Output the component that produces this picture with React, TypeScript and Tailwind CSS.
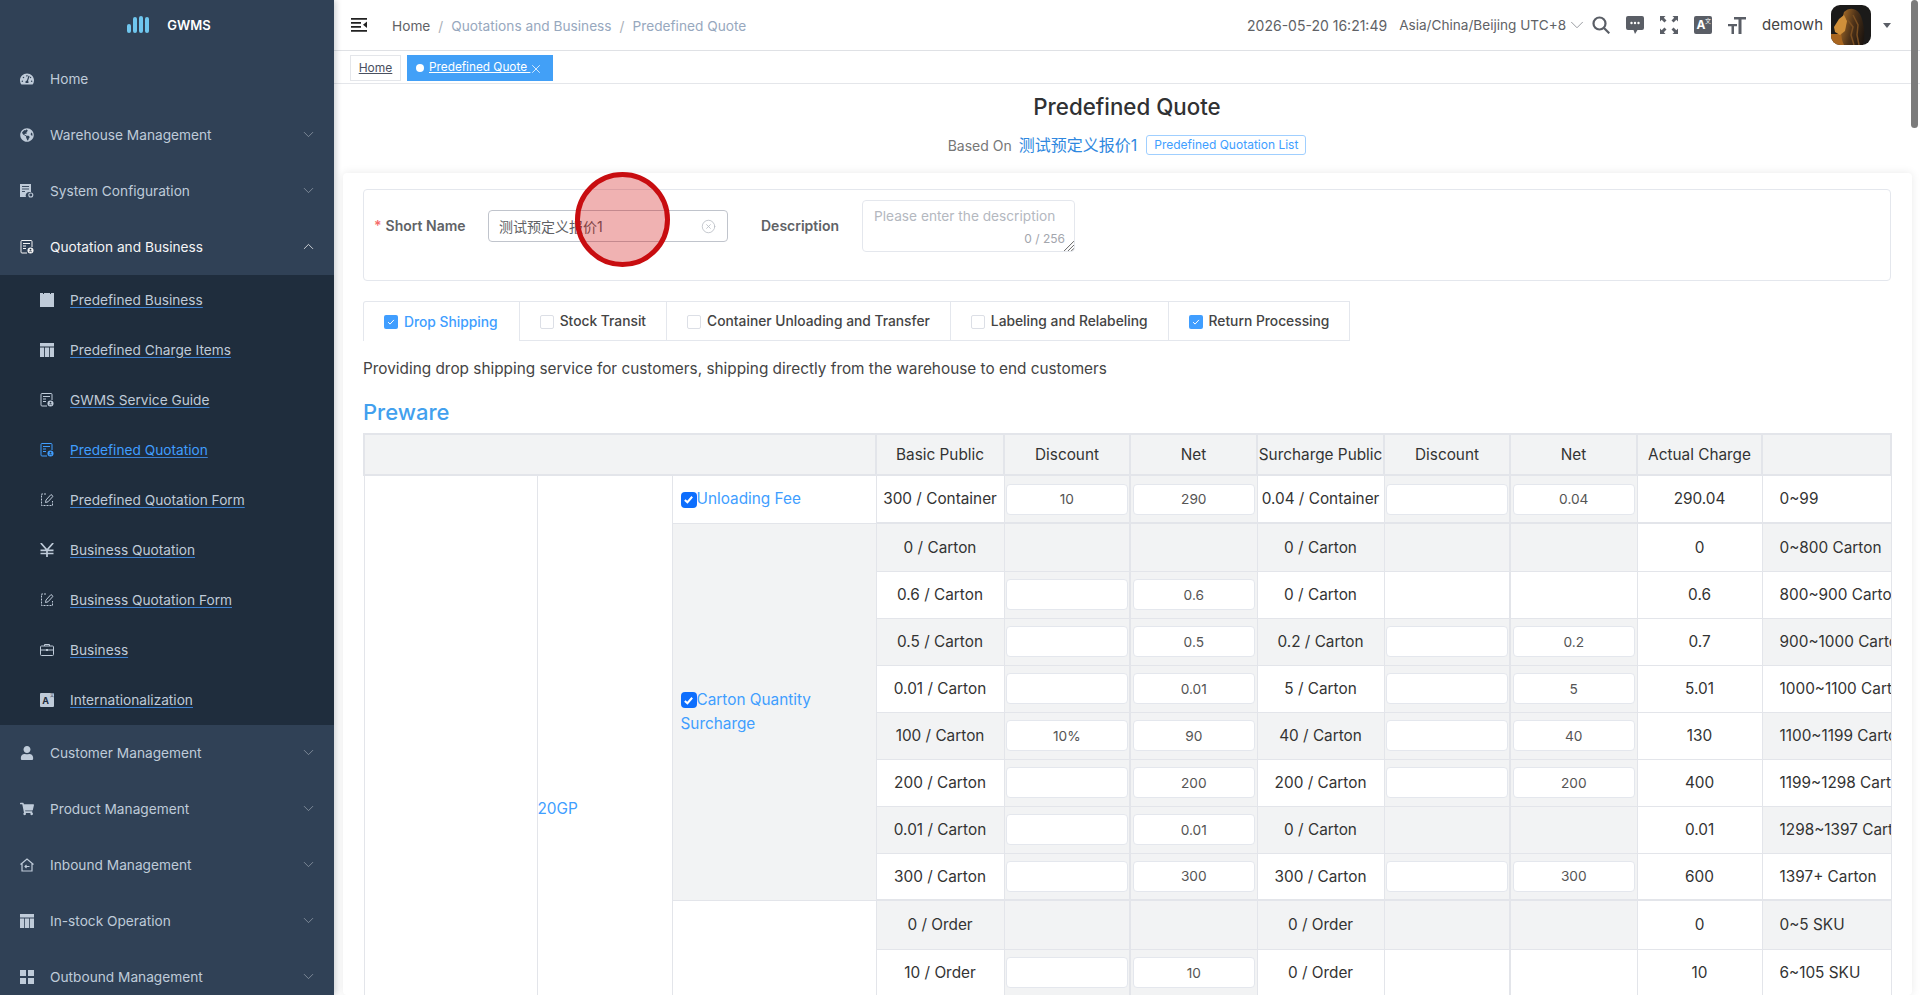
import React from "react";
import { ChevronDown, ChevronUp, X, CircleX } from "lucide-react";
import { FaTachometerAlt, FaGlobeAmericas, FaUser, FaShoppingCart } from "react-icons/fa";

const C = "w-[14px] h-[14px] shrink-0";

const DocIcon = () => (
  <svg viewBox="0 0 14 14" className={C} fill="none" stroke="currentColor" strokeWidth="1">
    <path d="M7 13H2a1 1 0 0 1-1-1V1.5a1 1 0 0 1 1-1h9a1 1 0 0 1 1 1V7" />
    <path d="M3 3.5h7M3 6h3M3 8.5h3" />
    <circle cx="10.5" cy="10.5" r="3" fill="currentColor" stroke="none" />
    <circle cx="10.5" cy="9.7" r="0.9" fill="#1f2d3d" stroke="none" />
    <path d="M9 12.2c.4-1 2.600-1 3 0" stroke="#1f2d3d" strokeWidth="0.7" />
  </svg>
);
const EditIcon = () => (
  <svg viewBox="0 0 14 14" className={C} fill="none" stroke="currentColor" strokeWidth="1">
    <path d="M6 1H1.500v11.500H12.500V8" strokeDasharray="2 1" />
    <path d="M5.500 9.500l.5-2.500 5-5.500 2 1.800-5 5.500z" />
  </svg>
);
const CalIcon = () => (
  <svg viewBox="0 0 14 14" className={C} fill="currentColor">
    <path d="M0 0h3v1h1V0h6v1h1V0h3v14H0z" />
  </svg>
);
const TableIcon = () => (
  <svg viewBox="0 0 14 14" className={C} fill="currentColor">
    <path d="M0 0h14v3.500H0zM0 4.500h4.200V14H0zM5 4.500h4V14H5zM9.800 4.500H14V14H9.800z" />
  </svg>
);
const YenIcon = () => (
  <svg viewBox="0 0 14 14" className={C} fill="none" stroke="currentColor" strokeWidth="1.700">
    <path d="M.8 0L7 7l6.200-7M7 7v7M.5 7.300h13M.5 10.500h13" />
  </svg>
);
const GridIcon = () => (
  <svg viewBox="0 0 14 14" className={C} fill="currentColor">
    <path d="M0 0h6v6H0zM8 0h6v6H8zM0 8h6v6H0zM8 8h6v6H8z" />
  </svg>
);
const CaseIcon = () => (
  <svg viewBox="0 0 14 14" className={C} fill="none" stroke="currentColor" strokeWidth="1">
    <rect x="0.500" y="3" width="13" height="9.500" rx="1" />
    <path d="M4.500 3V1.500h5V3M0.500 7h13" />
    <rect x="6" y="6" width="2" height="2" fill="currentColor" stroke="none" />
  </svg>
);
const SysIcon = () => (
  <svg viewBox="0 0 14 14" className={C} fill="currentColor">
    <path d="M0 0h11v8H9a3.500 3.500 0 0 0-3 5H0z" />
    <path d="M2 2.500h7M2 5h7M2 7.500h3" stroke="#304156" strokeWidth="0.900" />
    <circle cx="10.800" cy="11" r="2" fill="none" stroke="currentColor" strokeWidth="1.100" />
  </svg>
);
const InboundIcon = () => (
  <svg viewBox="0 0 14 14" className={C} fill="none" stroke="currentColor" strokeWidth="1.200">
    <path d="M.5 6.500L7 1l6.500 5.500M2 5.500V13h10V5.500" />
    <path d="M9.500 8.500H5M6.500 7L5 8.500 6.500 10" strokeWidth="1.100" />
  </svg>
);
const TransBadge = ({ dark }: { dark?: boolean }) => (
  <span
    className={
      dark
        ? "w-[18px] h-[18px] shrink-0 rounded-[2px] bg-[#5a5e66] text-white flex items-center justify-center text-[12px] font-bold leading-none relative pr-[4px]"
        : "w-[14px] h-[14px] shrink-0 rounded-[1px] bg-[#bfcbd9] text-[#1f2d3d] flex items-center justify-center text-[9px] font-bold leading-none relative pr-[3px]"
    }
  >
    A
    <span className={dark ? "absolute right-[1px] top-[2px] text-[6px] font-normal" : "absolute right-0 top-[1px] text-[4px] font-normal"}>文</span>
  </span>
);

const menu1 = [
  { t: "Home", i: <FaTachometerAlt className={C} /> },
  { t: "Warehouse Management", i: <FaGlobeAmericas className={C} />, c: 1 },
  { t: "System Configuration", i: <SysIcon />, c: 1 },
];
const subs = [
  { t: "Predefined Business", i: <CalIcon /> },
  { t: "Predefined Charge Items", i: <TableIcon /> },
  { t: "GWMS Service Guide", i: <DocIcon /> },
  { t: "Predefined Quotation", i: <DocIcon />, a: 1 },
  { t: "Predefined Quotation Form", i: <EditIcon /> },
  { t: "Business Quotation", i: <YenIcon /> },
  { t: "Business Quotation Form", i: <EditIcon /> },
  { t: "Business", i: <CaseIcon /> },
  { t: "Internationalization", i: <TransBadge /> },
];
const menu2 = [
  { t: "Customer Management", i: <FaUser className={C} /> },
  { t: "Product Management", i: <FaShoppingCart className={C} /> },
  { t: "Inbound Management", i: <InboundIcon /> },
  { t: "In-stock Operation", i: <TableIcon /> },
  { t: "Outbound Management", i: <GridIcon /> },
];

function MenuRow({ t, i, c }: { t: string; i: React.ReactNode; c?: boolean | number }) {
  return (
    <div className="h-[56px] flex items-center pl-[20px] pr-[17px] text-[#bfcbd9] text-[13.7px]">
      {i}
      <span className="ml-[16px] flex-1">{t}</span>
      {c ? <ChevronDown className="w-[17px] h-[17px] text-[#909ba8] mb-[2px]" strokeWidth={1.1} /> : null}
    </div>
  );
}

type R = [string, string | null, string | null, string, string | null, string | null, string, string];
const carton: R[] = [
  ["0 / Carton", null, null, "0 / Carton", null, null, "0", "0~800 Carton"],
  ["0.6 / Carton", "", "0.6", "0 / Carton", null, null, "0.6", "800~900 Carton"],
  ["0.5 / Carton", "", "0.5", "0.2 / Carton", "", "0.2", "0.7", "900~1000 Carton"],
  ["0.01 / Carton", "", "0.01", "5 / Carton", "", "5", "5.01", "1000~1100 Carton"],
  ["100 / Carton", "10%", "90", "40 / Carton", "", "40", "130", "1100~1199 Carton"],
  ["200 / Carton", "", "200", "200 / Carton", "", "200", "400", "1199~1298 Carton"],
  ["0.01 / Carton", "", "0.01", "0 / Carton", null, null, "0.01", "1298~1397 Carton"],
  ["300 / Carton", "", "300", "300 / Carton", "", "300", "600", "1397+ Carton"],
];
const sku: R[] = [
  ["0 / Order", null, null, "0 / Order", null, null, "0", "0~5 SKU"],
  ["10 / Order", "", "10", "0 / Order", null, null, "10", "6~105 SKU"],
];

const bd = "border border-[#e3e5ea]";

function InputCell({ v, rowBg, thick, top }: { v: string | null; rowBg: boolean; thick?: boolean; top?: boolean }) {
  const bg = v !== null || rowBg ? "bg-[#f2f3f4]" : "bg-white";
  return (
    <td className={`${bd} ${bg} ${thick ? "border-r-2" : ""} ${top ? "border-t-2" : ""} text-center`}>
      {v !== null && (
        <input
          readOnly
          value={v}
          className="block mx-auto w-[calc(100%-3px)] h-[31px] bg-white rounded-[4px] border border-[#e4e7ed] text-center text-[13.7px] text-[#555] outline-none"
        />
      )}
    </td>
  );
}

function Row({ r, gray, top, lead, h }: { r: R; gray: boolean; top?: boolean; lead?: React.ReactNode; h: string }) {
  const t = top ? "border-t-2" : "";
  const rb = gray ? "bg-[#f2f3f4]" : "bg-white";
  return (
    <tr className={h}>
      {lead}
      <td className={`${bd} ${rb} ${t} text-center whitespace-nowrap`}>{r[0]}</td>
      <InputCell v={r[1]} rowBg={gray} thick top={top} />
      <InputCell v={r[2]} rowBg={gray} top={top} />
      <td className={`${bd} ${rb} ${t} text-center whitespace-nowrap`}>{r[3]}</td>
      <InputCell v={r[4]} rowBg={gray} thick top={top} />
      <InputCell v={r[5]} rowBg={gray} top={top} />
      <td className={`${bd} bg-white ${t} text-center`}>{r[6]}</td>
      <td className={`${bd} ${rb} ${t} pl-[17px] overflow-hidden whitespace-nowrap`}>{r[7]}</td>
    </tr>
  );
}

const Fee = ({ t }: { t: string }) => (
  <div className="text-[#409eff] leading-[24px]">
    <span className="inline-flex align-[-1px] items-center justify-center w-[16px] h-[16px] rounded-[4px] bg-[#0d6efd]">
      <svg viewBox="0 0 12 12" className="w-[11px] h-[11px]" fill="none" stroke="#fff" strokeWidth="2.200">
        <path d="M2 6.500l2.800 2.500L10 3" />
      </svg>
    </span>
    {t}
  </div>
);

const TabCheck = ({ on }: { on?: boolean }) =>
  on ? (
    <span className="w-[14px] h-[14px] rounded-[2px] bg-[#409eff] flex items-center justify-center">
      <svg viewBox="0 0 12 12" className="w-[10px] h-[10px]" fill="none" stroke="#fff" strokeWidth="1.200">
        <path d="M2.500 6.200l2.400 2.300L9.500 3.500" />
      </svg>
    </span>
  ) : (
    <span className="w-[14px] h-[14px] rounded-[2px] bg-white border border-[#dcdfe6]" />
  );

const tabs = [
  { t: "Drop Shipping", on: 1, act: 1 },
  { t: "Stock Transit" },
  { t: "Container Unloading and Transfer" },
  { t: "Labeling and Relabeling" },
  { t: "Return Processing", on: 1 },
];

export default function App() {
  return (
    <div
      className="relative flex h-[995px] w-[1920px] overflow-hidden bg-white text-[#333]"
      style={{ fontFamily: '"Inter","Noto Sans CJK SC",sans-serif' }}
    >
      {/* Sidebar */}
      <aside className="w-[334px] shrink-0 bg-[#304156] overflow-hidden shadow-[2px_0_6px_rgba(0,21,41,0.2)] z-10">
        <div className="h-[51px] flex items-start justify-center pt-[16px]">
          <svg viewBox="0 0 22 17" className="w-[22px] h-[17px] ml-[4px]" fill="#6fc6ee">
            <rect x="0" y="8" width="4" height="9" rx="2" />
            <rect x="6" y="1" width="4" height="16" rx="2" />
            <rect x="12" y="0" width="4" height="17" rx="2" />
            <rect x="18" y="1" width="4" height="16" rx="2" />
          </svg>
          <span className="ml-[18px] text-white text-[13px] font-semibold leading-[14px] mt-[2px]">GWMS</span>
        </div>
        {menu1.map((m) => (
          <MenuRow key={m.t} {...m} />
        ))}
        <div className="h-[56px] flex items-center pl-[20px] pr-[17px] text-[13.7px] text-[#f4f4f5]">
          <DocIcon />
          <span className="ml-[16px] flex-1">Quotation and Business</span>
          <ChevronUp className="w-[17px] h-[17px] mb-[2px]" strokeWidth={1.1} />
        </div>
        <div className="bg-[#1f2d3d]">
          {subs.map((s) => (
            <div
              key={s.t}
              className={`h-[50px] flex items-center pl-[40px] text-[13.7px] ${s.a ? "text-[#409eff]" : "text-[#bfcbd9]"}`}
            >
              {s.i}
              <span className="ml-[16px] underline decoration-[#3b7fd0] underline-offset-2">{s.t}</span>
            </div>
          ))}
        </div>
        {menu2.map((m) => (
          <MenuRow key={m.t} {...m} c={1} />
        ))}
      </aside>

      {/* Main */}
      <main className="flex-1 min-w-0 flex flex-col overflow-hidden">
        <header className="h-[51px] shrink-0 border-b border-[#dfe1e5] flex items-center text-[13.7px] pr-[29px]">
          <svg viewBox="0 0 16 14" className="w-[16px] h-[14px] ml-[17px]" fill="#222">
            <path d="M0 0h16v1.800H0zM0 4h10v1.800H0zM0 8h10v1.800H0zM0 12h16v1.800H0zM16 3.500v6.500l-4-3.200z" />
          </svg>
          <span className="ml-[25px] pt-[2px] text-[#606266]">Home</span>
          <span className="mx-[8px] pt-[2px] text-[#aab0b8]">/</span>
          <span className="pt-[2px] text-[#97a8be]">Quotations and Business</span>
          <span className="mx-[8px] pt-[2px] text-[#aab0b8]">/</span>
          <span className="pt-[2px] text-[#97a8be]">Predefined Quote</span>
          <div className="ml-auto flex items-center text-[#606266]">
            <span className="text-[14px] pt-[1px]">2026-05-20 16:21:49</span>
            <span className="ml-[12px] pt-[1px] text-[13.6px]">Asia/China/Beijing UTC+8</span>
            <ChevronDown className="w-[22px] h-[22px] text-[#909399]" strokeWidth={1} />
            <svg viewBox="0 0 18 18" className="w-[18px] h-[18px] ml-[4px]" fill="none" stroke="#5a5e66" strokeWidth="2.200">
              <circle cx="7.500" cy="7.500" r="6" />
              <path d="M12 12l5.300 5.300" />
            </svg>
            <svg viewBox="0 0 18 18" className="w-[18px] h-[18px] ml-[16px]" fill="#5a5e66">
              <path d="M2 0h14a2 2 0 0 1 2 2v10a2 2 0 0 1-2 2h-4.500L9 18l-1.500-4H2a2 2 0 0 1-2-2V2a2 2 0 0 1 2-2z" />
              <circle cx="5.500" cy="7" r="1.200" fill="#fff" />
              <circle cx="9" cy="7" r="1.200" fill="#fff" />
              <circle cx="12.500" cy="7" r="1.200" fill="#fff" />
            </svg>
            <svg viewBox="0 0 18 18" className="w-[18px] h-[18px] ml-[16px]" fill="#5a5e66">
              <path d="M0 0h5.500L3.800 1.700 6.500 4.400 4.400 6.500 1.700 3.800 0 5.500zM18 0v5.500l-1.700-1.700-2.700 2.700-2.100-2.100 2.700-2.700L12.500 0zM0 18v-5.500l1.700 1.700 2.700-2.700 2.100 2.100-2.700 2.700L5.500 18zM18 18h-5.500l1.700-1.700-2.700-2.700 2.100-2.100 2.700 2.700 1.700-1.700z" />
            </svg>
            <span className="ml-[16px]">
              <TransBadge dark />
            </span>
            <svg viewBox="0 0 18 18" className="w-[18px] h-[18px] ml-[16px]" fill="#5a5e66">
              <path d="M6 1h12v2.500h-4.500V18h-3V3.500H6zM0 8h9v2.200H6V18H3.500v-7.800H0z" />
            </svg>
            <span className="ml-[16px] pt-[1px] text-[#444] text-[15px]">demowh</span>
            <svg viewBox="0 0 40 40" className="w-[40px] h-[40px] ml-[8px] rounded-[9px]">
              <defs>
                <linearGradient id="mane" x1="0" y1="0.300" x2="1" y2="0.700">
                  <stop offset="0" stopColor="#a66c28" />
                  <stop offset="0.500" stopColor="#4f3319" />
                  <stop offset="1" stopColor="#1e1610" />
                </linearGradient>
              </defs>
              <rect width="40" height="40" fill="#1b1a19" />
              <rect y="29" width="15" height="11" fill="#a8651f" />
              <path d="M13 7C19 1 28 3 31 14c3 10 3 20 1 26H13C9 32 11 26 9 22z" fill="url(#mane)" />
              <path d="M3 22l5-8 5-4 3 6-2 10-5 4-5-3z" fill="#cf8f3a" />
              <path d="M16 14l6 8-2 8 3 10M22 10l5 10-1 10 2 10" stroke="#7a4f22" strokeWidth="1.500" fill="none" />
            </svg>
            <span className="ml-[12px] w-0 h-0 border-x-[4px] border-x-transparent border-t-[5px] border-t-[#5a5e66]" />
          </div>
        </header>

        <div className="h-[33px] shrink-0 border-b border-[#e4e6ea] pt-[4px] pl-[16px] flex items-start gap-[6px] text-[12px]">
          <span className="h-[26px] w-[51px] border border-[#e4e6ea] flex items-center justify-center text-[#495060] underline">Home</span>
          <span className="h-[26px] w-[146px] bg-[#42a0f7] text-white flex items-center pl-[9px] text-[11.8px]">
            <span className="w-[8px] h-[8px] rounded-full bg-white mr-[5px]" />
            <span className="underline">Predefined Quote&nbsp;</span>
            <X className="w-[14px] h-[14px] -ml-[1px] mt-[1px]" strokeWidth={1.3} />
          </span>
        </div>

        <div className="h-[89px] shrink-0 flex flex-col items-center pt-[9px]">
          <h1 className="text-[22.3px] leading-[28px] font-medium text-[#303133]">Predefined Quote</h1>
          <div className="mt-[10px] h-[28px] flex items-center">
            <span className="text-[14px] text-[#777]">Based On</span>
            <span className="ml-[7px] text-[16px] text-[#2f88e0]">测试预定义报价1</span>
            <span className="ml-[9px] h-[20px] px-[7px] flex items-center rounded-[3px] border border-[#a0cfff] text-[12px] text-[#409eff]">
              Predefined Quotation List
            </span>
          </div>
        </div>

        <section className="ml-[9px] mr-[8px] flex-1 min-h-0 bg-white rounded-[4px] shadow-[0_0_10px_rgba(0,0,0,0.09)] pt-[16px] pl-[20px] pr-[21px] overflow-hidden">
          <div className="h-[92px] border border-[#e4e7ed] rounded-[4px] flex items-start">
            <label className="w-[124px] h-[32px] mt-[20px] pl-[10px] pb-[2px] flex items-center text-[14px] font-semibold text-[#606266]">
              <span className="text-[#f56c6c] mr-[4px]">*</span>Short Name
            </label>
            <div className="w-[240px] h-[32px] mt-[20px] border border-[#c0c4cc] rounded-[4px] flex items-center pl-[10px] pr-[11px] text-[14px] text-[#606266]">
              <span className="flex-1">测试预定义报价1</span>
              <CircleX className="w-[15px] h-[15px] text-[#b8bcc4]" strokeWidth={1.3} />
            </div>
            <label className="ml-[33px] w-[101px] h-[32px] mt-[20px] pb-[2px] flex items-center text-[14px] font-semibold text-[#606266]">Description</label>
            <div className="relative w-[213px] h-[52px] mt-[10px] border border-[#e4e7ed] rounded-[4px] pl-[11px] pt-[5px] text-[13.7px] text-[#b4b8bf]">
              Please enter the description
              <span className="absolute right-[9px] bottom-[3px] text-[12px] text-[#a3a6ad]">0 / 256</span>
              <svg viewBox="0 0 10 10" className="absolute right-0 bottom-0 w-[11px] h-[11px]" stroke="#666" strokeWidth="0.900">
                <path d="M10 1L1 10M10 4.500L4.500 10M10 7.500L7.500 10" />
              </svg>
            </div>
          </div>

          <div className="mt-[20px] flex text-[13.8px] font-medium">
            {tabs.map((t, i) => (
              <div
                key={t.t}
                className={`h-[40px] flex items-center gap-[6px] pl-[20px] pt-[1px] border-t border-r border-[#e4e7ed] ${i === 0 ? "border-l rounded-tl-[3px] pr-[21px]" : "pr-[20px]"} ${t.act ? "text-[#409eff]" : "border-b text-[#444]"}`}
              >
                <TabCheck on={!!t.on} />
                {t.t}
              </div>
            ))}
          </div>

          <p className="mt-[16px] text-[15.35px] leading-[24px] text-[#444]">
            Providing drop shipping service for customers, shipping directly from the warehouse to end customers
          </p>
          <h2 className="mt-[15px] text-[22px] leading-[32px] font-medium text-[#42a0ee]">Preware</h2>

          <table className="mt-[5px] w-[1527px] table-fixed border-collapse text-[15.35px] text-[#333]">
            <colgroup>
              <col className="w-[173px]" />
              <col className="w-[135px]" />
              <col className="w-[204px]" />
              <col className="w-[128px]" />
              <col className="w-[126px]" />
              <col className="w-[127px]" />
              <col className="w-[127px]" />
              <col className="w-[126px]" />
              <col className="w-[127px]" />
              <col className="w-[125px]" />
              <col className="w-[129px]" />
            </colgroup>
            <thead>
              <tr className="h-[41px] bg-[#f2f3f4] font-normal">
                <th colSpan={3} className="border-2 border-[#e3e5ea]" />
                {["Basic Public", "Discount", "Net", "Surcharge Public", "Discount", "Net", "Actual Charge"].map((h, i) => (
                  <th key={i} className="border-2 border-[#e3e5ea] font-normal whitespace-nowrap overflow-hidden">
                    {h}
                  </th>
                ))}
                <th className="border-2 border-[#e3e5ea]" />
              </tr>
            </thead>
            <tbody>
              <Row
                r={["300 / Container", "10", "290", "0.04 / Container", "", "0.04", "290.04", "0~99"]}
                gray={false}
                h="h-[48px]"
                lead={
                  <>
                    <td rowSpan={12} className={`${bd} bg-white`} />
                    <td rowSpan={12} className={`${bd} bg-white text-[#409eff]`}>20GP</td>
                    <td className={`${bd} bg-white pl-[8px]`}>
                      <Fee t="Unloading Fee" />
                    </td>
                  </>
                }
              />
              {carton.map((r, i) => (
                <Row
                  key={i}
                  r={r}
                  gray={i % 2 === 0}
                  top={i === 0}
                  h={i === 0 ? "h-[48px]" : "h-[47px]"}
                  lead={
                    i === 0 ? (
                      <td rowSpan={8} className={`${bd} bg-[#f2f3f4] pl-[8px] pr-[20px]`}>
                        <Fee t="Carton Quantity Surcharge" />
                      </td>
                    ) : undefined
                  }
                />
              ))}
              {sku.map((r, i) => (
                <Row
                  key={i}
                  r={r}
                  gray={i % 2 === 0}
                  top={i === 0}
                  h={i === 0 ? "h-[49px]" : "h-[47px]"}
                  lead={
                    i === 0 ? (
                      <td rowSpan={3} className={`${bd} bg-white pl-[8px] align-bottom pb-[11px]`}>
                        <Fee t="SKU Sorting Fee" />
                      </td>
                    ) : undefined
                  }
                />
              ))}
              <tr className="h-[145px]">
                <td colSpan={8} className={bd} />
              </tr>
            </tbody>
          </table>
        </section>
      </main>

      {/* Scrollbar thumb */}
      <div className="absolute right-[2px] top-0 w-[7px] h-[128px] rounded-full bg-[#7b7b7b]" />
      {/* Click marker */}
      <div className="absolute left-[575px] top-[172px] w-[95px] h-[95px] rounded-full border-[5px] border-[#c80d10] bg-[#d00000]/30" />
    </div>
  );
}
